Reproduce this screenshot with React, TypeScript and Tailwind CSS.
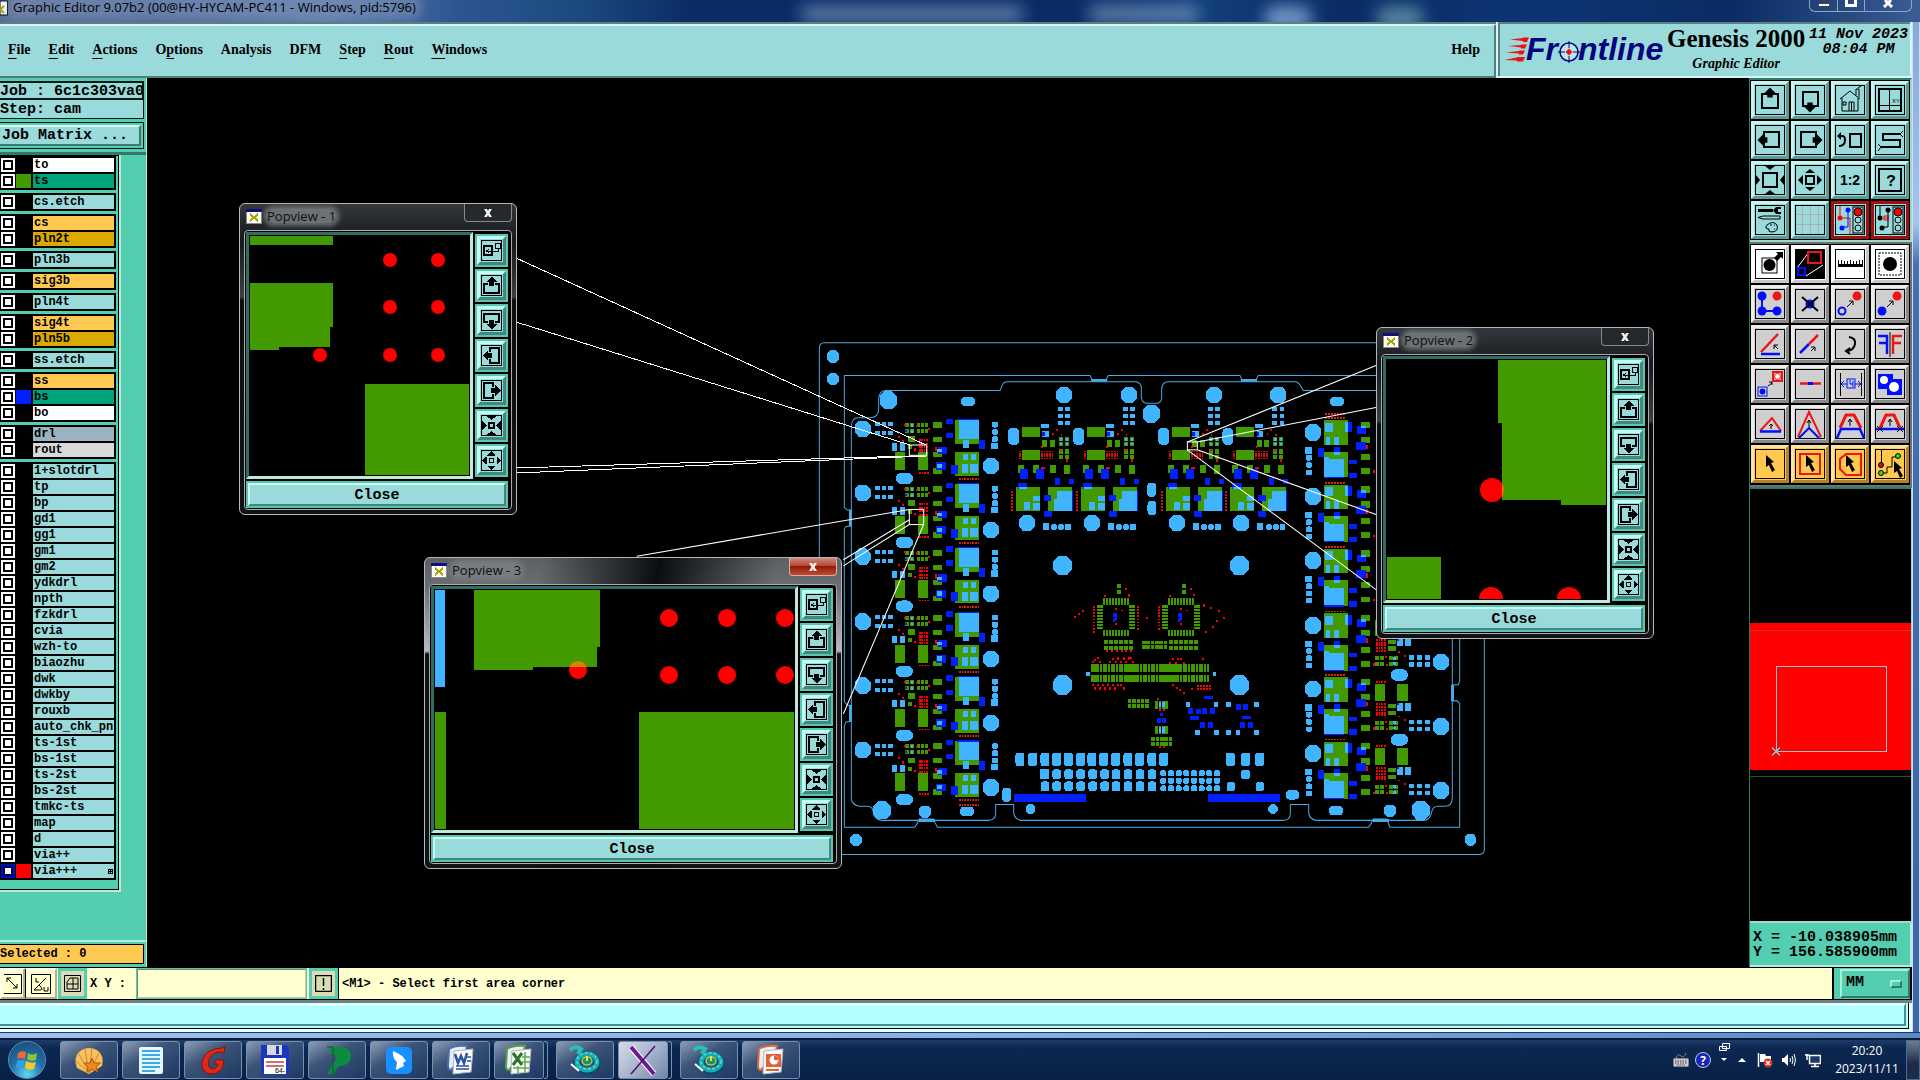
import React from "react";

type Box = [number, number, number, number];

const MONO = "font-['Liberation_Mono','Courier_New',monospace]";
const SERIF = "font-['Liberation_Serif','Times_New_Roman',serif]";
const UI = "font-['Open_Sans','Noto_Sans',sans-serif]";

const GREEN = "#429a00";
const RED = "#ff0000";
const BLUE = "#0020ff";
const SKY = "#40b4ff";

/* ---------------------------------------------------------------- board */

const Boxes = ({ list, fill }: { list: Box[]; fill: string }) => (
  <g fill={fill}>
    {list.map(([x1, y1, x2, y2], i) => (
      <rect key={i} x={x1} y={y1} width={x2 - x1} height={y2 - y1} />
    ))}
  </g>
);

const Pad = ({ x, y, w, h, r = 12 }: { x: number; y: number; w: number; h: number; r?: number }) => (
  <rect x={x - w / 2} y={y - h / 2} width={w} height={h} rx={r} fill={SKY} />
);

const Oct = ({ x, y, r }: { x: number; y: number; r: number }) => {
  const k = r * 0.45;
  return (
    <polygon
      fill={SKY}
      points={`${x - k},${y - r} ${x + k},${y - r} ${x + r},${y - k} ${x + r},${y + k} ${x + k},${y + r} ${x - k},${y + r} ${x - r},${y + k} ${x - r},${y - k}`}
    />
  );
};

const Grid = ({ x, y, nx, ny, px, py, w, h, fill }: { x: number; y: number; nx: number; ny: number; px: number; py: number; w: number; h: number; fill: string }) => (
  <g fill={fill}>
    {Array.from({ length: nx * ny }, (_, i) => (
      <rect key={i} x={x + (i % nx) * px} y={y + Math.floor(i / nx) * py} width={w} height={h} />
    ))}
  </g>
);

const LeftModule = () => (
  <g>
    <Oct x={158} y={287} r={24} />
    <Grid x={195} y={268} nx={3} ny={2} px={20} py={25} w={14} h={12} fill={SKY} />
    <Grid x={285} y={270} nx={2} ny={2} px={15} py={17} w={12} h={12} fill={GREEN} />
    <Grid x={302} y={273} nx={1} ny={2} px={15} py={17} w={8} h={8} fill={SKY} />
    <Grid x={320} y={270} nx={3} ny={2} px={13} py={17} w={9} h={12} fill={GREEN} />
    <Boxes fill={RED} list={[[282, 272, 287, 278], [318, 275, 323, 281], [355, 284, 360, 290], [264, 308, 269, 314], [276, 320, 281, 326], [312, 344, 317, 350], [375, 339, 381, 351]]} />
    <Grid x={327} y={317} nx={4} ny={5} px={7} py={10} w={5} h={6} fill={RED} />
    <Grid x={327} y={412} nx={4} ny={1} px={8} py={8} w={5} h={5} fill={RED} />
    <Boxes fill={GREEN} list={[[369, 267, 396, 285], [293, 309, 315, 325], [293, 335, 307, 347], [369, 310, 396, 325], [255, 354, 285, 407], [324, 354, 354, 407], [369, 354, 396, 370], [369, 400, 396, 417], [435, 261, 507, 331], [435, 354, 507, 423]]} />
    <Boxes fill={BLUE} list={[[409, 257, 429, 273], [409, 298, 429, 314], [440, 258, 507, 262], [384, 339, 411, 360], [379, 384, 408, 407], [423, 391, 443, 417], [507, 319, 525, 345], [286, 290, 290, 296]]} />
    <Boxes fill={SKY} list={[[447, 262, 507, 316], [460, 319, 477, 342], [246, 329, 260, 350], [271, 329, 285, 350], [460, 360, 474, 378], [482, 360, 498, 378], [456, 389, 474, 415], [481, 389, 503, 415], [382, 345, 396, 355], [382, 388, 396, 400], [543, 327, 563, 346]]} />
    <Pad x={555} y={275} w={18} h={17} r={6} />
    <Pad x={555} y={296} w={18} h={17} r={6} />
    <Pad x={555} y={317} w={18} h={17} r={6} />
    <Oct x={543} y={395} r={24} />
    <Grid x={447} y={430} nx={8} ny={1} px={8} py={8} w={5} h={6} fill="#e02010" />
    <Pad x={283} y={431} w={52} h={33} r={18} />
  </g>
);

const TopModule = () => (
  <g>
    <Oct x={762} y={189} r={24} />
    <Grid x={744} y={223} nx={2} ny={3} px={22} py={20} w={14} h={13} fill={SKY} />
    <Pad x={611} y={309} w={33} h={50} r={13} />
    <Boxes fill={GREEN} list={[[636, 282, 690, 311], [697, 318, 712, 340], [720, 318, 734, 340], [636, 348, 690, 377], [624, 392, 642, 416], [668, 392, 686, 416], [720, 392, 737, 416], [762, 392, 780, 418], [618, 457, 690, 525], [714, 457, 786, 525]]} />
    <Boxes fill={SKY} list={[[693, 273, 716, 286], [697, 294, 716, 311]]} />
    <Grid x={747} y={311} nx={2} ny={2} px={17} py={14} w={12} h={11} fill={GREEN} />
    <Grid x={750} y={315} nx={2} ny={2} px={17} py={14} w={7} h={6} fill={SKY} />
    <Grid x={747} y={347} nx={2} ny={2} px={17} py={15} w={12} h={12} fill={GREEN} />
    <Grid x={627} y={350} nx={1} ny={4} px={8} py={7} w={6} h={5} fill={RED} />
    <Grid x={693} y={350} nx={5} ny={4} px={8} py={7} w={5} h={5} fill="#e00c04" />
    <Grid x={603} y={467} nx={1} ny={7} px={8} py={9} w={6} h={6} fill="#d01808" />
    <Boxes fill={RED} list={[[738, 288, 743, 294], [727, 300, 732, 306], [694, 338, 699, 343], [752, 303, 757, 308], [768, 376, 773, 382], [750, 345, 755, 350], [693, 398, 705, 403]]} />
    <Boxes fill={BLUE} list={[[697, 297, 705, 307], [630, 405, 654, 432], [678, 405, 702, 432], [734, 430, 749, 449], [777, 433, 791, 448], [624, 444, 652, 463], [702, 479, 724, 498], [702, 527, 726, 542], [786, 465, 789, 525]]} />
    <Boxes fill={SKY} list={[[642, 500, 660, 523], [669, 483, 690, 497], [669, 502, 690, 523], [732, 467, 786, 525], [699, 561, 717, 580], [627, 457, 651, 463]]} />
    <Boxes fill={GREEN} list={[[732, 467, 742, 490]]} />
    <Oct x={651} y={561} r={24} />
    <Oct x={733} y={572} r={9} />
    <Oct x={754} y={572} r={9} />
    <Boxes fill={SKY} list={[[766, 563, 782, 581]]} />
  </g>
);

const RightModule = () => (
  <g transform="translate(1020 0)">
    <Oct x={489} y={297} r={24} />
    <Grid x={525} y={254} nx={7} ny={1} px={9} py={8} w={6} h={5} fill="#e02010" />
    <Boxes fill={GREEN} list={[[521, 262, 594, 334], [522, 354, 594, 428], [633, 267, 660, 285], [633, 311, 660, 329], [633, 360, 660, 377], [633, 401, 660, 418]]} />
    <Boxes fill={BLUE} list={[[585, 267, 605, 295], [504, 344, 522, 370], [552, 341, 570, 362], [597, 377, 621, 390], [597, 414, 621, 430], [621, 279, 648, 302], [618, 325, 648, 348], [522, 426, 582, 430]]} />
    <Boxes fill={SKY} list={[[525, 269, 549, 295], [528, 310, 540, 333], [552, 310, 567, 333], [585, 267, 594, 295], [522, 370, 582, 427], [552, 354, 570, 362], [633, 279, 648, 286], [465, 341, 486, 360]]} />
    <Boxes fill={GREEN} list={[[538, 364, 582, 376]]} />
    <Boxes fill={RED} list={[[648, 334, 654, 347], [669, 408, 675, 414]]} />
    <Pad x={477} y={371} w={18} h={17} r={6} />
    <Pad x={477} y={392} w={18} h={17} r={6} />
    <Pad x={477} y={413} w={18} h={15} r={4} />
  </g>
);

const FarRightModule = () => (
  <g transform="translate(1020 0)">
    <Oct x={873} y={1151} r={24} />
    <Grid x={777} y={1132} nx={3} ny={2} px={24} py={20} w={14} h={13} fill={SKY} />
    <Boxes fill={GREEN} list={[[675, 1028, 705, 1077], [741, 1028, 774, 1077], [714, 1087, 737, 1098], [714, 1106, 737, 1118]]} />
    <Grid x={678} y={1084} nx={4} ny={5} px={8} py={8} w={5} h={6} fill={RED} />
    <Grid x={678} y={1019} nx={4} ny={1} px={8} py={8} w={5} h={5} fill={RED} />
    <Boxes fill={SKY} list={[[741, 1084, 759, 1105], [765, 1084, 783, 1105]]} />
    <Boxes fill={BLUE} list={[[741, 1084, 747, 1090]]} />
    <Grid x={675} y={1134} nx={2} ny={2} px={16} py={16} w={12} h={12} fill={GREEN} />
    <Grid x={717} y={1134} nx={2} ny={2} px={16} py={16} w={12} h={12} fill={GREEN} />
    <Grid x={730} y={1136} nx={1} ny={2} px={16} py={16} w={9} h={8} fill={SKY} />
    <Boxes fill={RED} list={[[705, 1134, 710, 1140], [669, 1155, 674, 1161], [762, 1130, 767, 1136], [744, 1120, 749, 1125], [709, 1157, 714, 1162]]} />
  </g>
);

const Chip = () => (
  <g>
    <Grid x={879} y={779} nx={9} ny={1} px={9} py={0} w={6} h={19} fill={GREEN} />
    <Grid x={879} y={871} nx={9} ny={1} px={9} py={0} w={6} h={19} fill={GREEN} />
    <Grid x={861} y={800} nx={1} ny={8} px={0} py={9} w={18} h={6} fill={GREEN} />
    <Grid x={956} y={800} nx={1} ny={8} px={0} py={9} w={18} h={6} fill={GREEN} />
    <Grid x={849} y={802} nx={1} ny={8} px={0} py={9} w={6} h={5} fill={RED} />
    <Boxes fill={GREEN} list={[[921, 739, 933, 750], [921, 755, 933, 766]]} />
    <Boxes fill={BLUE} list={[[910, 822, 921, 832], [909, 836, 914, 848], [915, 832, 921, 845]]} />
    <Boxes fill={RED} list={[[882, 769, 887, 775], [945, 749, 950, 755], [954, 767, 959, 773], [915, 808, 920, 813], [933, 812, 938, 817], [915, 852, 920, 857]]} />
    <Grid x={882} y={901} nx={6} ny={2} px={15} py={16} w={12} h={11} fill={GREEN} />
  </g>
);

const RED_SPECKS: Array<[number, number]> = [
  [792, 830], [804, 822], [816, 813], [1008, 833], [846, 961], [852, 954], [860, 950], [866, 961], [898, 961], [906, 952], [914, 961], [921, 951], [929, 961], [938, 951], [946, 961], [953, 951], [960, 949], [966, 961],
  [888, 930], [903, 930], [917, 930], [932, 930], [945, 930], [960, 930], [846, 1029], [852, 1038], [860, 1029], [867, 1038], [875, 1029], [883, 1038], [890, 1029], [898, 1038], [905, 1029], [912, 1038], [920, 1029], [930, 1029], [938, 1038],
  [850, 874], [954, 769], [1078, 963], [1086, 953], [1094, 963], [1102, 953], [1110, 953], [1118, 963], [1176, 952], [1086, 1029], [1097, 1036], [1108, 1042], [1119, 1051], [1180, 797], [1199, 805], [1225, 814], [1240, 833], [1218, 843], [1206, 859], [1186, 875], [1144, 1040], [1040, 1069],
];

const leftTops = [0, 186, 371, 560, 746, 933];

const Board = () => (
  <svg className="absolute inset-0 h-full w-full" viewBox="147 78 1602 889" preserveAspectRatio="xMinYMin meet" shapeRendering="crispEdges" role="img" aria-label="Circuit board view">
    <g transform="translate(810 330) scale(0.33333 0.34436)">
      <g fill="none" stroke="#4aa8e4" strokeWidth="3">
        <rect x="28" y="37" width="1995" height="1486" rx="14" />
        <path d="M103 132H840L845 141V149H890V141L895 132H1290L1294 141V149H1340V141L1345 132H1949V1020L1945 1030H1928V1077H1942L1949 1085V1444H1740L1734 1430L1728 1420H1690L1684 1432L1676 1444H382L376 1432L370 1420H328L322 1432L314 1444H103V1150L108 1138L124 1136V1090H112L103 1080V578L108 570H124V523H112L103 515Z" />
        <path d="M124 280Q125 255 145 255H180Q205 255 206 230V200Q208 176 228 176H570L577 160Q580 150 592 150H978Q994 152 994 170V195Q996 213 1012 213H1038Q1055 212 1055 195V172Q1056 150 1075 150H1455Q1468 152 1473 165L1480 176H1900L1927 200V1360Q1926 1383 1905 1383H1885Q1868 1383 1865 1400Q1860 1424 1840 1424H1518Q1497 1420 1496 1400V1378H1441V1405Q1440 1424 1420 1424H633Q612 1420 611 1400V1378H557V1405Q556 1424 535 1424H215Q192 1420 190 1400Q188 1383 172 1383H148Q126 1380 124 1360Z" />
        <path d="M845 146H890M1294 146H1340M328 1424H376M1690 1424H1736" strokeWidth="7" />
        <path d="M122 523V568M122 1090V1136M1928 1030V1077" strokeWidth="7" />
      </g>

      {leftTops.map((t) => (
        <g key={t} transform={`translate(0 ${t})`}>
          <LeftModule />
        </g>
      ))}
      <Grid x={447} y={1377} nx={8} ny={1} px={8} py={8} w={5} h={6} fill="#e02010" />
      {[0, 195, 450, 643].map((t) => (
        <g key={t} transform={`translate(${t} 0)`}>
          <TopModule />
        </g>
      ))}
      {[0, 187, 373, 561, 746, 933].map((t) => (
        <g key={t} transform={`translate(0 ${t})`}>
          <RightModule />
        </g>
      ))}
      {[-187, 0, 186].map((t) => (
        <g key={t} transform={`translate(0 ${t})`}>
          <FarRightModule />
        </g>
      ))}
      <Pad x={1768} y={1002} w={52} h={34} r={18} />
      <Pad x={1768} y={1190} w={52} h={34} r={18} />
      <Grid x={1545} y={240} nx={7} ny={1} px={9} py={8} w={6} h={6} fill="#e02010" />

      <Oct x={69} y={77} r={18} />
      <Oct x={69} y={142} r={18} />
      <Oct x={138} y={1481} r={18} />
      <Oct x={1981} y={1480} r={17} />
      <Oct x={235} y={204} r={26} />
      <Oct x={216} y={1395} r={26} />
      <Oct x={345} y={1399} r={18} />
      <Oct x={1024} y={243} r={26} />
      <Oct x={1740} y={1396} r={18} />
      <Oct x={1832} y={1395} r={27} />
      <Pad x={474} y={208} w={42} h={26} />
      <Pad x={471} y={1398} w={42} h={27} />
      <Pad x={1581} y={208} w={42} h={26} />
      <Pad x={1578} y={1396} w={42} h={27} />
      <Pad x={1025} y={464} w={27} h={42} />
      <Pad x={1026} y={517} w={27} h={42} />
      <Oct x={758} y={684} r={28} />
      <Oct x={758} y={1031} r={28} />
      <Oct x={1288} y={684} r={28} />
      <Oct x={1288} y={1031} r={28} />

      <Chip />
      <Grid x={981} y={802} nx={1} ny={8} px={0} py={9} w={6} h={5} fill="#d01808" />
      <g transform="translate(195 0)">
        <Chip />
      </g>
      <Grid x={996} y={903} nx={6} ny={2} px={13} py={13} w={11} h={10} fill={GREEN} />
      <Boxes fill={GREEN} list={[[843, 970, 868, 993], [843, 1001, 868, 1021], [948, 970, 978, 993], [948, 1001, 978, 1021], [1060, 970, 1110, 993], [1060, 1001, 1100, 1021]]} />
      <Grid x={870} y={970} nx={41} ny={1} px={8} py={0} w={6} h={23} fill={GREEN} />
      <Grid x={870} y={1001} nx={41} ny={1} px={8} py={0} w={6} h={20} fill={GREEN} />
      <Boxes fill={SKY} list={[[828, 992, 840, 1004], [1208, 992, 1218, 1004]]} />
      <Grid x={954} y={1072} nx={5} ny={2} px={13} py={14} w={10} h={11} fill={GREEN} />
      <Grid x={1036} y={1076} nx={4} ny={1} px={10} py={0} w={8} h={24} fill={GREEN} />
      <Grid x={1046} y={1080} nx={2} ny={1} px={11} py={0} w={7} h={16} fill={SKY} />
      <Grid x={1042} y={1128} nx={2} ny={1} px={15} py={0} w={12} h={14} fill={BLUE} />
      <Boxes fill={BLUE} list={[[1050, 1112, 1058, 1122]]} />
      <Grid x={1036} y={1150} nx={4} ny={1} px={10} py={0} w={8} h={23} fill={GREEN} />
      <Grid x={1046} y={1153} nx={2} ny={1} px={11} py={0} w={7} h={16} fill={SKY} />
      <Grid x={1024} y={1183} nx={5} ny={2} px={13} py={13} w={11} h={11} fill={GREEN} />
      <Grid x={1046} y={1102} nx={2} ny={1} px={12} py={0} w={6} h={5} fill={RED} />
      <Grid x={1046} y={1208} nx={2} ny={1} px={14} py={0} w={6} h={5} fill={RED} />
      <Grid x={1160} y={1031} nx={5} ny={2} px={9} py={8} w={6} h={6} fill={RED} />
      <g fill={RED}>
        {RED_SPECKS.map(([x, y], i) => (
          <rect key={i} x={x} y={y} width="6" height="6" />
        ))}
      </g>
      <Boxes fill={BLUE} list={[[1182, 1064, 1208, 1073], [1134, 1098, 1150, 1114], [1158, 1102, 1172, 1116], [1176, 1098, 1190, 1114], [1200, 1098, 1215, 1114], [1278, 1086, 1292, 1103], [1299, 1086, 1314, 1103], [1141, 1122, 1167, 1132], [1170, 1138, 1185, 1155], [1193, 1138, 1208, 1155], [1296, 1122, 1322, 1131], [1291, 1138, 1305, 1155], [1313, 1138, 1328, 1155]]} />
      <Boxes fill={SKY} list={[[1127, 1080, 1140, 1095], [1212, 1080, 1225, 1095], [1249, 1080, 1262, 1095], [1332, 1079, 1347, 1095], [1155, 1161, 1169, 1177], [1212, 1161, 1226, 1177], [1249, 1161, 1262, 1177], [1277, 1161, 1291, 1177], [1332, 1161, 1347, 1177]]} />

      {[630, 668, 705, 740, 775, 812, 846, 881, 917, 954, 989, 1026, 1061, 1261, 1307, 1349].map((x) => (
        <Pad key={x} x={x} y={1247} w={27} h={40} r={9} />
      ))}
      <Boxes fill={SKY} list={[[690, 1276, 717, 1304]]} />
      {[740, 776, 812, 848, 884, 918, 954, 990, 1026].map((x) => (
        <Pad key={x} x={x} y={1290} w={26} h={28} r={7} />
      ))}
      {[705, 740, 776, 812, 848, 884, 918, 954, 990, 1026].map((x) => (
        <Pad key={x} x={x} y={1325} w={26} h={28} r={7} />
      ))}
      {[1287, 1309, 1331].map((y) =>
        [1060, 1083, 1106, 1129, 1152, 1175, 1198, 1221].map((x) => <Pad key={`${x}-${y}`} x={x} y={y} w={18} h={17} r={5} />)
      )}
      <Pad x={590} y={1350} w={27} h={42} />
      <Pad x={1447} y={1350} w={40} h={27} />
      <Pad x={1307} y={1291} w={27} h={26} r={8} />
      <Pad x={1263} y={1326} w={26} h={26} r={8} />
      <Pad x={1350} y={1326} w={26} h={26} r={8} />
      <Oct x={662} y={1391} r={14} />
      <Oct x={1389} y={1391} r={14} />
      <Boxes fill={BLUE} list={[[612, 1347, 828, 1371], [1194, 1347, 1410, 1371]]} />

      <g fill="none" stroke="#ffffff" strokeWidth="3">
        <rect x="298" y="334" width="52" height="30" />
        <rect x="298" y="521" width="43" height="44" />
        <rect x="1132" y="325" width="30" height="23" />
        <path d="M298 521L-520 657M298 551L100 667M298 565L100 685M341 565L100 1115" />
        <path d="M1132 325L1698 103M1162 325L1698 225M1162 348L1698 536M1132 348L1698 754" />
      </g>
    </g>
    <path d="M516 258L926 445M516 322L910 445M516 468L910 456M516 473L926 456" stroke="#ffffff" fill="none" />
  </svg>
);

/* -------------------------------------------------------- popview windows */

const ARROW_UP = "0,-5 5,0 2.5,0 2.5,4 -2.5,4 -2.5,0 -5,0";

const popIcons: { name: string; art: React.ReactNode }[] = [
  {
    name: "Link view",
    art: (
      <>
        <rect x="3" y="6" width="8" height="9" fill="none" stroke="#000" strokeWidth="2" />
        <rect x="14" y="3" width="5" height="5" fill="none" stroke="#000" />
        <path d="M17 8V11H5M8 9L5.500 11L8 13" fill="none" stroke="#000" />
      </>
    ),
  },
  {
    name: "Pan up",
    art: (
      <>
        <path d="M7 9H3V18H18V9H14" fill="none" stroke="#000" strokeWidth="2" />
        <polygon points={ARROW_UP} transform="translate(10.5 7) scale(1.1)" />
      </>
    ),
  },
  {
    name: "Pan down",
    art: (
      <>
        <path d="M7 12H3V4H18V12H14" fill="none" stroke="#000" strokeWidth="2" />
        <polygon points={ARROW_UP} transform="translate(10.5 14) scale(1.1 -1.1)" />
      </>
    ),
  },
  {
    name: "Pan left",
    art: (
      <>
        <path d="M9 7V3H18V18H9V14" fill="none" stroke="#000" strokeWidth="2" />
        <polygon points={ARROW_UP} transform="translate(7 10.5) rotate(-90) scale(1.1)" />
      </>
    ),
  },
  {
    name: "Pan right",
    art: (
      <>
        <path d="M12 7V3H3V18H12V14" fill="none" stroke="#000" strokeWidth="2" />
        <polygon points={ARROW_UP} transform="translate(14 10.5) rotate(90) scale(1.1)" />
      </>
    ),
  },
  {
    name: "Zoom out",
    art: (
      <>
        <rect x="8" y="8" width="5" height="5" fill="none" stroke="#000" strokeWidth="2" />
        <path d="M5 1H16L13 3H12L10.500 5L9 3H8ZM5 20H16L13 18H12L10.500 16L9 18H8ZM1 5V16L3 13L6 10.500L3 8ZM20 5V16L18 13L15 10.500L18 8Z" />
      </>
    ),
  },
  {
    name: "Zoom in",
    art: (
      <>
        <rect x="8.500" y="8.500" width="4" height="4" fill="none" stroke="#000" />
        <path d="M6.500 5.500L10.500 1L14.500 5.500ZM6.500 15.500L10.500 20L14.500 15.500ZM5.500 6.500L1 10.500L5.500 14.500ZM15.500 6.500L20 10.500L15.500 14.500Z" />
      </>
    ),
  },
];

const AppIcon = () => (
  <svg className="h-4 w-4 shrink-0" viewBox="0 0 16 16" shapeRendering="crispEdges" aria-hidden="true">
    <rect x="0.500" y="1.500" width="15" height="14" fill="#fff" stroke="#8a8a8a" />
    <rect x="0" y="1" width="16" height="3" fill="#10107a" />
    <path d="M4 6L12 13M12 6L4 13" stroke="#a8a800" strokeWidth="2" />
  </svg>
);

const frameDark = "bg-[linear-gradient(180deg,#34383c_0%,#15181c_12%,#3c3f42_30%,#0c0d0f_31%,#101316_100%)]";
const frameGrey = "bg-[linear-gradient(100deg,transparent_25%,#0a0d12_50%,transparent_75%),linear-gradient(180deg,#5c6064_0%,#6c7074_10%,#b8bcc0_30%,#101214_31%,#101316_100%)]";

function Popview({ title, view, place, hot, children }: { title: string; view: string; place: string; hot?: boolean; children: React.ReactNode }) {
  return (
    <section aria-label={title} className={`absolute flex flex-col rounded-md border border-[#b4b8bc] px-1 pb-1 ${hot ? frameGrey : frameDark} ${place}`}>
      <header className="flex h-[26px] items-start pl-0.5">
        <span className="flex items-center gap-[5px] pt-1">
          <AppIcon />
          <span className={`rounded-md bg-[#7c8284]/80 text-[13px] leading-[14px] text-[#101010] shadow-[0_0_5px_3px_rgba(124,130,132,0.8)] ${UI}`}>{title}</span>
        </span>
        <button aria-label={`Close ${title}`} className={`ml-auto flex h-[18px] w-[48px] items-center justify-center rounded-b-[4px] border border-t-0 text-white ${hot ? "border-[#d8b0a8] bg-[linear-gradient(180deg,#d08a7e_0%,#b84634_45%,#8e1c0c_50%,#c44a30_100%)]" : "border-[#85898c] bg-[#26292c]"}`}>
          <svg className="h-2.5 w-2.5" viewBox="0 0 10 10" aria-hidden="true">
            <path d="M1 1H4L5 3L6 1H9L6.500 5L9 9H6L5 7L4 9H1L3.500 5Z" fill="#f4f4f4" />
          </svg>
        </button>
      </header>
      <div className="flex min-h-0 flex-1 flex-col gap-0.5 rounded-sm border border-[#a8acb0] bg-black p-px pr-[3px]">
        <div className="flex min-h-0 flex-1 gap-0.5">
          <div className="min-w-0 flex-1 border-[3px] border-b-[#bdeade] border-l-[#2f6e60] border-r-[#bdeade] border-t-[#2f6e60]">
            <svg className="h-full w-full" viewBox={view} preserveAspectRatio="none" role="img" aria-label={`${title} detail`}>
              {children}
            </svg>
          </div>
          <div className="flex flex-col gap-0.5 pt-0.5">
            {popIcons.map((icon) => (
              <button key={icon.name} aria-label={icon.name} className="h-[33px] w-[33px] border-2 border-[#5cc4ac]">
                <span className="flex h-full w-full items-center justify-center border-[3px] border-b-[#3f8a80] border-l-[#c2fbf4] border-r-[#3f8a80] border-t-[#c2fbf4] bg-[#9bdada]">
                  <svg className="h-[21px] w-[21px] shrink-0" viewBox="0 0 21 21" shapeRendering="crispEdges" aria-hidden="true">
                    <rect x="0.500" y="0.500" width="20" height="20" fill="none" stroke="#000" />
                    {icon.art}
                  </svg>
                </span>
              </button>
            ))}
          </div>
        </div>
        <button className="h-[27px] border-2 border-[#5cc4ac]">
          <span className={`flex h-full items-center justify-center border-2 border-b-[#3f8a80] border-l-[#c2fbf4] border-r-[#3f8a80] border-t-[#c2fbf4] bg-[#9bdada] pt-0.5 text-[15px] font-bold leading-[17px] text-black ${MONO}`}>Close</span>
        </button>
      </div>
    </section>
  );
}

const Dot = ({ x, y, r }: { x: number; y: number; r: number }) => <circle cx={x} cy={y} r={r} fill={RED} />;

/* ----------------------------------------------------------- left layers */

type Layer = { name: string; tone: string; swatch?: string; active?: boolean };

const AQUA = "bg-[#9bdada]";
const WHITE = "bg-white";
const MINT = "bg-[#00a37c]";
const AMBER = "bg-[#ffc850]";
const GOLD = "bg-[#dba900]";

const layerGroups: Layer[][] = [
  [{ name: "to", tone: WHITE }, { name: "ts", tone: MINT, swatch: "bg-[#429a00]" }],
  [{ name: "cs.etch", tone: AQUA }],
  [{ name: "cs", tone: AMBER }, { name: "pln2t", tone: GOLD }],
  [{ name: "pln3b", tone: AQUA }],
  [{ name: "sig3b", tone: AMBER }],
  [{ name: "pln4t", tone: AQUA }],
  [{ name: "sig4t", tone: AMBER }, { name: "pln5b", tone: GOLD }],
  [{ name: "ss.etch", tone: AQUA }],
  [{ name: "ss", tone: AMBER }, { name: "bs", tone: MINT, swatch: "bg-[#0020ff]" }, { name: "bo", tone: WHITE }],
  [{ name: "drl", tone: "bg-[#9bb3bf]" }, { name: "rout", tone: "bg-[#d9d9d9]" }],
  [
    ..."1+slotdrl tp bp gd1 gg1 gm1 gm2 ydkdrl npth fzkdrl cvia wzh-to biaozhu dwk dwkby rouxb auto_chk_pnl ts-1st bs-1st ts-2st bs-2st tmkc-ts map d via++"
      .split(" ")
      .map((name) => ({ name, tone: AQUA })),
    { name: "via+++", tone: AQUA, swatch: "bg-[#ff0000]", active: true },
  ],
];

const LayerRow = ({ layer }: { layer: Layer }) => (
  <li>
    <label className="flex h-4 items-center gap-px pl-px">
      <span className={`flex h-3.5 w-3.5 items-center justify-center ${layer.active ? "bg-[#0010b8]" : "bg-white"}`}>
        <input type="checkbox" defaultChecked={layer.active} className="h-2.5 w-2.5 appearance-none border-2 border-black bg-white checked:border-[#000050]" />
      </span>
      <span className={`h-3.5 w-[15px] ${layer.swatch ?? "bg-black"}`} />
      <span className={`ml-px flex h-3.5 min-w-0 flex-1 items-center overflow-hidden whitespace-nowrap pl-px text-[12px] font-bold leading-[14px] text-black ${layer.tone}`}>
        {layer.name}
        {layer.active && (
          <svg className="ml-auto mr-px h-[5px] w-[5px]" viewBox="0 0 5 5" shapeRendering="crispEdges" aria-hidden="true">
            <path d="M.5 .5H4.500V4.500H.5ZM2.500 0V5M0 2.500H5" fill="none" stroke="#000" />
          </svg>
        )}
      </span>
    </label>
  </li>
);

const Sidebar = () => (
  <aside className={`flex w-[147px] shrink-0 flex-col border-r border-r-[#bdeade] bg-[#54ceb1] text-black ${MONO}`}>
    <div className="flex flex-col pb-[3px] pr-0.5 pt-[3px]">
      <div className="h-[19px] overflow-hidden whitespace-nowrap border-2 border-l-0 border-[#0a1a18] bg-[#9bdada] text-[15px] font-bold leading-[17px]">Job : 6c1c303va0</div>
      <div className="h-[19px] border border-l-0 border-t-0 border-[#0a1a18] bg-[#9bdada] text-[15px] font-bold leading-[19px]">Step: cam</div>
      <div className="mt-[3px] border border-l-0 border-[#0a1a18] py-0.5 pr-0.5">
        <button className="block h-[21px] w-full border-2 border-l-0 border-b-[#3f7a78] border-r-[#3f7a78] border-t-[#d6f6f6] bg-[#9bdada] pl-0.5 text-left text-[15px] font-bold leading-[16px]">Job Matrix ...</button>
      </div>
    </div>
    <div className="flex min-h-0 flex-1 flex-col border-b-2 border-t-[3px] border-b-[#bdeade] border-t-[#2f7a68]">
      <div className="w-[121px] border-b-2 border-r-2 border-b-[#bdeade] border-r-[#bdeade]">
        <div className="flex flex-col gap-[3px] border-b border-r border-t border-black pb-[9px] pr-0.5">
          {layerGroups.map((group, i) => (
            <ul key={i} className="bg-black py-px pr-0.5">
              {group.map((layer) => (
                <LayerRow key={layer.name} layer={layer} />
              ))}
            </ul>
          ))}
        </div>
      </div>
    </div>
    <div className="pb-[3px] pr-0.5 pt-0.5">
      <div className="h-5 border border-l-0 border-black bg-[#ffc850] text-[12px] font-bold leading-[18px]">Selected : 0</div>
    </div>
  </aside>
);

/* -------------------------------------------------------- right toolbars */

const K = "#000";
const GR = "#0010ff";
const RD = "#f01414";

type Tool = { name: string; art: React.ReactNode; hot?: boolean; dark?: boolean };

const Lights = ({ a, b }: { a: string; b: string }) => (
  <>
    <rect x="18" y="2" width="10" height="26" fill="none" stroke={K} />
    <circle cx="23" cy="7" r="4" fill={RED} stroke={K} />
    <circle cx="23" cy="15" r="3" fill="none" stroke={K} />
    <circle cx="23" cy="23" r="3" fill="none" stroke={K} />
    <path d="M13 5V22H7" fill="none" stroke={a} />
    <circle cx="13" cy="5" r="2.500" fill={a} />
    <circle cx="7" cy="23" r="2.500" fill={a} />
    <circle cx="5" cy="13" r="2.500" fill={b} />
  </>
);

const viewTools: Tool[] = [
  { name: "Pan up", art: <><rect x="7" y="9" width="16" height="14" fill="none" stroke={K} strokeWidth="2" /><polygon points={ARROW_UP} transform="translate(15 8) scale(1.1)" /></> },
  { name: "Pan down", art: <><rect x="8" y="7" width="15" height="14" fill="none" stroke={K} strokeWidth="2" /><polygon points={ARROW_UP} transform="translate(15 22) scale(1.1 -1.1)" /></> },
  { name: "Home view", art: <><path d="M5 14L15 6L25 14M7 13V26H23V13M21 10V4H24V12M14 26V17H19V26M16.500 17V26M8 17H11V20H8Z" fill="none" stroke={K} /><path d="M23 3L26 1" stroke={K} /></> },
  { name: "Zoom to XY", art: <><rect x="4" y="4" width="22" height="22" fill="none" stroke={K} strokeWidth="2" /><path d="M14.500 4V26M4 20.500H26" stroke={K} /><text x="17" y="18" fontSize="6" fontFamily="Liberation Sans, sans-serif">XY</text></> },
  { name: "Pan left", art: <><rect x="9" y="7" width="15" height="15" fill="none" stroke={K} strokeWidth="2" /><polygon points={ARROW_UP} transform="translate(8 15) rotate(-90) scale(1.1)" /></> },
  { name: "Pan right", art: <><rect x="6" y="7" width="15" height="15" fill="none" stroke={K} strokeWidth="2" /><polygon points={ARROW_UP} transform="translate(22 15) rotate(90) scale(1.1)" /></> },
  { name: "Previous view", art: <><rect x="15" y="9" width="11" height="13" fill="none" stroke={K} strokeWidth="2" /><path d="M4 11H7Q10 11 10 15Q10 21 4 21" fill="none" stroke={K} strokeWidth="2" /><path d="M2 11L6 7V15Z" /></> },
  { name: "Serpentine", art: <><path d="M25 9H8V15H25V22H6" fill="none" stroke={K} strokeWidth="2" /><path d="M28 6L25 9L28 12M3 19L6 22L3 26" fill="none" stroke={K} /></> },
  { name: "Zoom out", art: <><rect x="8" y="8" width="14" height="14" fill="none" stroke={K} strokeWidth="2" /><path d="M10 1H20L15 5ZM10 29H20L15 25ZM1 10V20L5 15ZM29 10V20L25 15Z" /></> },
  { name: "Zoom in", art: <><rect x="11" y="11" width="8" height="8" fill="none" stroke={K} strokeWidth="2" /><path d="M10 8L15 4L20 8ZM10 22L15 26L20 22ZM8 10L3 15L8 20ZM22 10L27 15L22 20Z" /></> },
  { name: "Scale one to two", art: <text x="15" y="20" textAnchor="middle" fontSize="14" fontWeight="bold" fontFamily="Liberation Sans, sans-serif">1:2</text> },
  { name: "Query", art: <><rect x="4" y="4" width="22" height="22" fill="none" stroke={K} strokeWidth="2" /><text x="16" y="21" textAnchor="middle" fontSize="16" fontWeight="bold" fontFamily="Liberation Mono, monospace">?</text></> },
  { name: "Settings", art: <><path d="M3 4H18V7H3Z" /><path d="M26 2H21L18 5.500L21 9H26V7H23V4H26Z" /><path d="M8 11H25V14H8L3 12.500Z" fill="none" stroke={K} /><path d="M12 20Q18 15 22 20Q24 27 16 27Q13 27 14 24Q9 24 12 20Z" fill="none" stroke={K} /><path d="M15 20H17M19 20H20M19 24H20" stroke={K} /></> },
  { name: "Grid", art: <path d="M7.500 1V29M15.500 1V29M23.500 1V29M1 9.500H29M1 19.500H29" stroke="#b8a8b0" /> },
  { name: "Net check on", hot: true, art: <><path d="M5 1V13H15V29" fill="none" stroke={RED} /><Lights a={GR} b={RED} /></> },
  { name: "Net check off", hot: true, art: <><path d="M5 1V13" fill="none" stroke={K} /><path d="M9 11H14M9 11V15H14M9 13H14" fill="none" stroke={RED} /><Lights a={K} b={K} /></> },
];

const editTools: Tool[] = [
  { name: "Popview", art: <><rect x="7" y="9" width="15" height="15" fill="none" stroke={K} /><circle cx="14.500" cy="16" r="6" /><path d="M19 9L23 5L21 3H28V10L26 8L22 12Z" /></> },
  { name: "Area popview", dark: true, art: <><rect x="0" y="0" width="30" height="30" /><path d="M2 19L14 3M11 27L28 16" stroke="#fff" /><rect x="13" y="3" width="13" height="11" fill="none" stroke={RD} strokeWidth="2" /><rect x="3" y="19" width="7" height="7" fill="none" stroke={GR} strokeWidth="2" /></> },
  { name: "Measure", art: <path d="M3 11H4V15H6V11H7V15H9V12H10V15H12V12H13V15H15V11H16V15H18V12H19V15H21V12H22V15H24V11H25V15H27V11H28V18H3Z" /> },
  { name: "Select pad", art: <><rect x="4" y="4" width="22" height="22" fill="none" stroke={K} strokeDasharray="2 1" /><circle cx="15" cy="15" r="7" /></> },
  { name: "Net select", art: <><path d="M7 7V22H23" fill="none" stroke={GR} strokeWidth="2" /><circle cx="7" cy="7" r="4.500" fill={GR} /><circle cx="7" cy="22" r="4.500" fill={GR} /><circle cx="22" cy="22" r="4.500" fill={GR} /><circle cx="22" cy="7" r="4.500" fill={RD} /></> },
  { name: "Delete", art: <><circle cx="15" cy="15" r="4.500" fill={GR} /><path d="M7 8L23 22M23 8L7 22" stroke={K} strokeWidth="2" /></> },
  { name: "Copy", art: <><circle cx="22" cy="7" r="4.500" fill={RD} /><circle cx="7" cy="22" r="3.500" fill="none" stroke={GR} strokeWidth="2" /><path d="M12 18L18 12M14 12H18V16" fill="none" stroke={K} /></> },
  { name: "Move", art: <><circle cx="22" cy="7" r="4.500" fill={RD} /><circle cx="7" cy="22" r="4.500" fill={GR} /><path d="M12 18L18 12M14 12H18V16" fill="none" stroke={K} /></> },
  { name: "Rotate", art: <><path d="M6 23L23 5" stroke={RD} strokeWidth="2.500" /><path d="M6 25H25" stroke={GR} strokeWidth="2.500" /><path d="M23 20L19 16M19 20V16H23" fill="none" stroke={K} /></> },
  { name: "Stretch", art: <><path d="M5 24L14 15" stroke={GR} strokeWidth="2.500" /><path d="M14 15L23 6" stroke={RD} strokeWidth="2.500" /><path d="M16 22L20 18M16 18H20V22" fill="none" stroke={K} /></> },
  { name: "Undo", art: <path d="M14 8Q21 9 20 15Q19 21 12 22M15 19L11 22L15 25" fill="none" stroke={K} strokeWidth="2" /> },
  { name: "Mirror", art: <><path d="M3 7H12V25M12 14H4" fill="none" stroke={GR} strokeWidth="2.500" /><path d="M27 7H18V25M18 14H26" fill="none" stroke={RD} strokeWidth="2.500" /><path d="M15 3V28" stroke={K} /></> },
  { name: "Copy to layer", art: <><rect x="18" y="3" width="9" height="9" fill="none" stroke={RD} strokeWidth="2" /><circle cx="22.500" cy="7.500" r="3" fill="#fff" stroke={RD} /><rect x="3" y="18" width="9" height="9" fill="none" stroke={GR} /><circle cx="7.500" cy="22.500" r="3" fill={GR} /><path d="M13 17L17 14M14 13H17V16" fill="none" stroke={K} /></> },
  { name: "Connect lines", art: <><path d="M5 14.500H26" stroke={RD} strokeWidth="2.500" /><path d="M13 14.500H18" stroke={GR} strokeWidth="3" /></> },
  { name: "Spacing", art: <><path d="M5.500 4V27M26.500 4V27" stroke={K} /><path d="M6 15H12M20 15H26M9 12L6 15L9 18M23 12L26 15L23 18" fill="none" stroke={GR} /><rect x="12" y="10" width="8" height="9" fill="none" stroke={GR} /><path d="M15 11V15H18M18 12V18" fill="none" stroke={GR} /></> },
  { name: "Surface", art: <><path d="M3 5H18V10H27V26H12V20H3Z" fill={GR} /><circle cx="9" cy="11" r="4" fill="#fff" /><circle cx="19" cy="18" r="5" fill="#fff" /></> },
  { name: "Move corner", art: <><path d="M5 22L17 9L26 22" fill="none" stroke={RD} strokeWidth="2" /><path d="M5 22.500H26" stroke={GR} strokeWidth="2.500" /><path d="M16 20V15M14 17L16 15L18 17" fill="none" stroke={K} /></> },
  { name: "Move vertex", art: <><path d="M3 28L14 3L26 28" fill="none" stroke={RD} strokeWidth="2" /><path d="M4 29L14 19L24 29" fill="none" stroke={GR} strokeWidth="2" /><path d="M14 18V11M12 14L14 11L16 14" fill="none" stroke={K} /></> },
  { name: "Move edge", art: <><path d="M5 19L11 6H19L26 19" fill="none" stroke={RD} strokeWidth="3" /><path d="M2 29L6 20H25L29 29" fill="none" stroke={GR} strokeWidth="2.500" /><path d="M15 17V10M13 13L15 10L17 13" fill="none" stroke={K} /></> },
  { name: "Trim edge", art: <><path d="M5 19L11 6H19L25 19" fill="none" stroke={RD} strokeWidth="3" /><path d="M1 20H29" stroke={GR} strokeWidth="2.500" /><path d="M15 17V10M13 13L15 10L17 13M2 17L8 23M8 17L2 23M22 17L28 23M28 17L22 23" fill="none" stroke={K} /></> },
];

const Cursor = ({ dx = 0, dy = 0 }: { dx?: number; dy?: number }) => (
  <path transform={`translate(${dx} ${dy})`} d="M11 6L19 13L16 14L20 21L17 23L14 16L11 18Z" />
);

const selectTools: Tool[] = [
  { name: "Single select", art: <Cursor /> },
  { name: "Box select", art: <><rect x="5" y="5" width="20" height="20" fill="none" stroke={RD} strokeWidth="2" /><Cursor /></> },
  { name: "Polygon select", art: <><path d="M11 5H26V26H11L5 20V10Z" fill="none" stroke={RD} strokeWidth="2" /><Cursor /></> },
  { name: "Trace select", art: <><path d="M6.500 1V14M6 24H12V18H17V8H22" fill="none" stroke={K} /><circle cx="6" cy="16" r="2.500" fill="#c01818" stroke={K} /><circle cx="6" cy="24" r="2.500" fill="#20e020" stroke={K} /><circle cx="23" cy="7" r="2.500" fill="#20e020" stroke={K} /><Cursor dx={8} dy={6} /></> },
];

const toolTone = {
  aqua: "border-t-[#c8f2ee] border-l-[#c8f2ee] border-b-[#5c9c98] border-r-[#5c9c98] bg-[#9bdada]",
  hot: "border-[#a01010] bg-[#9bdada]",
  white: "border-t-white border-l-white border-b-[#c8c8c8] border-r-[#c8c8c8] bg-white",
  grey: "border-t-[#ececec] border-l-[#ececec] border-b-[#888888] border-r-[#888888] bg-[#cfcfcf]",
  amber: "border-t-[#ffe2a0] border-l-[#ffe2a0] border-b-[#b08420] border-r-[#b08420] bg-[#ffc850]",
};

const ToolButton = ({ tool, tone }: { tool: Tool; tone: keyof typeof toolTone }) => (
  <button aria-label={tool.name} title={tool.name} className={`flex h-[38px] w-[38px] items-center justify-center border-[3px] ${toolTone[tone]}`}>
    <svg className="h-[30px] w-[30px] shrink-0" viewBox="0 0 30 30" aria-hidden="true">
      <rect x="0.500" y="0.500" width="29" height="29" fill="none" stroke={K} />
      {tool.art}
    </svg>
  </button>
);

const ToolPanel = () => (
  <aside className="flex w-[163px] shrink-0 flex-col border-l border-l-[#2f7a68] bg-black">
    <div className="grid grid-cols-4 justify-items-center gap-0.5 border-b-2 border-r-2 border-t-2 border-b-[#9bdac8] border-r-[#9bdac8] border-t-[#2f7a68] p-px">
      {viewTools.map((t) => (
        <ToolButton key={t.name} tool={t} tone={t.hot ? "hot" : "aqua"} />
      ))}
    </div>
    <div className="grid grid-cols-4 justify-items-center gap-0.5 border-b-2 border-r-2 border-t-2 border-[#707070] p-px pb-0.5">
      {editTools.map((t, i) => (
        <ToolButton key={t.name} tool={t} tone={i < 4 ? "white" : "grey"} />
      ))}
      {selectTools.map((t) => (
        <ToolButton key={t.name} tool={t} tone="amber" />
      ))}
    </div>
    <div className="min-h-0 flex-1 border-b-2 border-r border-t-2 border-b-[#9bdac8] border-r-[#9bdac8] border-t-[#2f7a68]">
      <svg className="h-full w-full" viewBox="1750 490 161 431" preserveAspectRatio="none" shapeRendering="crispEdges" role="img" aria-label="Board overview">
        <rect x="1750" y="624" width="161" height="146" fill={RED} />
        <path d="M1750 631.500H1911" stroke="#c84010" />
        <path d="M1750 776.500H1911" stroke="#1c5c0c" />
        <rect x="1776" y="667" width="110" height="85" fill="none" stroke="#90c8c8" />
        <path d="M1772 748L1780 756M1780 748L1772 756" stroke="#90c8c8" />
      </svg>
    </div>
    <div className={`flex h-[44px] flex-col justify-center border-b-2 border-r-2 border-b-[#bdeade] border-r-[#bdeade] bg-[#54ceb1] pl-[3px] pt-0.5 text-[15px] font-bold leading-[15px] text-black ${MONO}`}>
      <output>X = -10.038905mm</output>
      <output>Y = 156.585900mm</output>
    </div>
  </aside>
);

/* --------------------------------------------------------------- top bars */

const menu: [string, string, string][] = [
  ["", "F", "ile"],
  ["", "E", "dit"],
  ["", "A", "ctions"],
  ["O", "p", "tions"],
  ["Analysis", "", ""],
  ["DFM", "", ""],
  ["", "S", "tep"],
  ["", "R", "out"],
  ["", "W", "indows"],
];

const TitleBar = () => (
  <header className="flex h-[22px] shrink-0 items-start justify-between overflow-hidden bg-[linear-gradient(90deg,#5a6f94_0%,#4a679a_8%,#5c7cae_17%,#2c5590_24%,#1c4a80_30%,#0a2c66_36%,#0a2c66_56%,#12407c_62%,#0a2c66_70%,#0c3474_80%,#0a2c62_90%,#3c5c94_100%)]">
    <h1 className="flex items-start">
      <svg className="h-4 w-2 shrink-0" viewBox="8 0 8 16" aria-hidden="true">
        <rect x="8" y="1" width="7.500" height="14" fill="#fff" stroke="#000" />
        <path d="M8 10L12 6M8 9L12 13" stroke="#a8a800" strokeWidth="2" />
      </svg>
      <span className={`ml-[5px] whitespace-nowrap rounded bg-[#8496b8]/50 text-[13px] leading-[14px] text-black shadow-[0_0_8px_6px_rgba(132,150,184,0.5)] ${UI}`}>Graphic Editor 9.07b2 (00@HY-HYCAM-PC411 - Windows, pid:5796)</span>
    </h1>
    <div aria-hidden="true" className="flex gap-16 pt-1.5">
      <span className="h-4 w-56 rounded-full bg-[#98b4d0]/60 blur-sm" />
      <span className="h-4 w-28 rounded-full bg-[#98b4d0]/60 blur-sm" />
      <span className="h-6 w-12 rounded-full bg-[#98c0e8]/70 blur-sm" />
      <span className="h-6 w-12 rounded-full bg-[#70a8b8]/70 blur-sm" />
    </div>
    <div className="mr-2 flex h-3 rounded-b-md border border-t-0 border-[#8fa6c8]">
      <button aria-label="Minimize" className="flex w-7 justify-center border-r border-[#8fa6c8] pt-[3px]"><span className="h-1 w-3 border border-[#444] bg-white" /></button>
      <button aria-label="Maximize" className="flex w-[27px] justify-center border-r border-[#8fa6c8]"><span className="h-[7px] w-3 border-[3px] border-t-0 border-white" /></button>
      <button aria-label="Close" className="flex w-[46px] justify-center">
        <svg className="h-2 w-3" viewBox="0 0 12 8"><path d="M3 0L10 7M9 0L2 7" stroke="#fff" strokeWidth="3" /></svg>
      </button>
    </div>
  </header>
);

const Logo = () => (
  <svg className="h-12 w-[162px] shrink-0 overflow-visible" viewBox="1503 26 162 48" role="img" aria-label="Frontline">
    <path fill="#f01010" d="M1509 39.500L1522 38V37.500H1528L1526 42H1522V41ZM1507 46L1520 45V44.500H1526L1524 48.500H1520V47.500ZM1505 52.500L1518 51V50.500H1524L1522 54.500H1518V53.500ZM1503 60L1516 57.500V57H1524L1522 61.500H1516V60.500Z" />
    <g fill="#06067c" fontFamily="Liberation Sans, Arial, sans-serif" fontWeight="bold" fontStyle="italic" fontSize="32">
      <text x="1525" y="60">Fr</text>
      <text x="1577" y="60">ntline</text>
    </g>
    <circle cx="1568" cy="52" r="9" fill="#b8e8e8" stroke="#06067c" strokeWidth="1.500" />
    <path d="M1568 41V48M1568 56V63M1557 52H1564M1572 52H1579" stroke="#06067c" />
    <path d="M1568 48.500L1571.500 52L1568 55.500L1564.500 52Z" fill="#f01010" />
  </svg>
);

const MenuBar = () => (
  <div className="flex h-14 shrink-0 gap-1 bg-[#d8f4f4] pt-0.5">
    <nav className={`flex flex-1 items-center border-b-2 border-r-2 border-t-2 border-b-[#4f7c7c] border-r-[#4f7c7c] border-t-[#d8f4f4] bg-[#9bdada] pb-[3px] pl-2 pr-[14px] text-[14px] font-bold text-black shadow-[0_-2px_0_#5c8080] ${SERIF}`}>
      <div className="flex gap-[18px]">
        {menu.map(([a, u, b]) => (
          <button key={a + u + b}>
            {a}
            {u && <span className="underline decoration-1 underline-offset-4">{u}</span>}
            {b}
          </button>
        ))}
      </div>
      <button className="ml-auto">Help</button>
    </nav>
    <div className="flex w-[412px] shrink-0 border-b-2 border-r-2 border-b-[#d8f4f4] border-r-[#d8f4f4] bg-[#9bdada] pl-1 text-black shadow-[-2px_-2px_0_#5c8080]">
      <div className="pt-0.5">
        <Logo />
      </div>
      <div className={`flex flex-col items-center pl-px pt-px font-bold ${SERIF}`}>
        <span className="whitespace-nowrap text-[25px] leading-7">Genesis 2000</span>
        <span className="whitespace-nowrap text-[14px] italic leading-[22px]">Graphic Editor</span>
      </div>
      <time className={`ml-auto whitespace-nowrap pr-0.5 pt-[3px] text-center text-[15px] font-bold italic leading-[15px] ${MONO}`}>
        11 Nov 2023
        <br />
        08:04 PM
      </time>
    </div>
  </div>
);

/* ------------------------------------------------------------ bottom bars */

const cmdButton = "flex items-center justify-center border-2 border-t-[#fffff0] border-l-[#fffff0] border-b-[#b0b090] border-r-[#b0b090] bg-[#ffffd0]";

const CommandBar = () => (
  <div className={`flex h-[33px] shrink-0 border-y border-black bg-[#ffffd0] text-[12px] font-bold text-black ${MONO}`}>
    <button aria-label="Absolute coordinates" className={`w-[25px] ${cmdButton}`}>
      <svg className="h-5 w-[18px] shrink-0" viewBox="1 0 18 20" aria-hidden="true"><path d="M.5 .5H18.500V19.500H.5M4 4L14 14M4 8V4H8M14 10V14H10" fill="none" stroke="#000" /></svg>
    </button>
    <button aria-label="Angle coordinates" className={`w-8 border-l border-l-black ${cmdButton}`}>
      <svg className="h-5 w-5" viewBox="0 0 20 20" aria-hidden="true"><path d="M.5 .5H19.500V19.500H.5ZM3 16L15 4M3 16H10M8 11Q11 13 11 16M5 4V8H8M13 13V17H17V13" fill="none" stroke="#000" /></svg>
    </button>
    <button aria-label="Snap to grid" className="ml-px w-[29px] border-[3px] border-[#54ceb1]">
      <span className="flex h-full items-center justify-center bg-[#dcdcb4]">
        <svg className="h-[17px] w-[17px]" viewBox="0 0 17 17" aria-hidden="true"><path d="M.5 .5H16.500V16.500H.5ZM3 7L6 3H14V14H3ZM9 3V14M3 9H14" fill="none" stroke="#000" /></svg>
      </span>
    </button>
    <label htmlFor="xy" className="flex w-[49px] items-center whitespace-nowrap pl-[3px]">X Y :</label>
    <input id="xy" className="w-[171px] border-2 border-b-[#c8c8a0] border-l-[#80806c] border-r-[#c8c8a0] border-t-[#80806c] bg-[#ffffd0] px-1 outline-1 -outline-offset-1 outline-[#54ceb1]" />
    <button aria-label="Notice" className="ml-0.5 w-[29px] border-[3px] border-[#54ceb1]">
      <span className="flex h-full items-center justify-center bg-[#dcdcb4]">
        <svg className="h-[17px] w-[17px]" viewBox="0 0 17 17" aria-hidden="true"><path d="M.5 .5H16.500V16.500H.5ZM8.500 3V11M8.500 13V15" fill="none" stroke="#000" strokeWidth="1.500" /></svg>
      </span>
    </button>
    <p className="flex flex-1 items-center whitespace-nowrap border-l border-black pl-[3px]">&lt;M1&gt; - Select first area corner</p>
    <div className="flex w-[80px] border-l-2 border-r-2 border-black bg-[#54ceb1] py-px pl-1.5">
      <label className="relative flex flex-1">
        <span className="sr-only">Units</span>
        <select className="w-full appearance-none border-2 border-b-[#2f7a68] border-l-[#a8f0dc] border-r-[#2f7a68] border-t-[#a8f0dc] bg-[#54ceb1] pl-1 text-[15px] font-bold">
          <option>MM</option>
        </select>
        <span aria-hidden="true" className="pointer-events-none absolute right-2 top-1/2 h-2 w-3 -translate-y-1/2 border-2 border-b-[#2f7a68] border-l-[#a8f0dc] border-r-[#2f7a68] border-t-[#a8f0dc]" />
      </label>
    </div>
  </div>
);

type Task = { name: string; art: React.ReactNode; gap: string; active?: boolean; stack?: boolean };

const Snake = () => (
  <g fill="none">
    <ellipse cx="18" cy="19" rx="10" ry="8" stroke="#0a4868" strokeWidth="7" />
    <ellipse cx="18" cy="18" rx="10" ry="8" stroke="#18a8b0" strokeWidth="5" />
    <ellipse cx="18" cy="17" rx="10" ry="8" stroke="#50e0d0" strokeWidth="1.500" strokeDasharray="3 2" />
    <ellipse cx="18" cy="17" rx="5" ry="4" fill="#109088" stroke="#b8c830" strokeWidth="1.500" />
    <path d="M18 12V17" stroke="#e8e040" strokeWidth="2" />
    <path d="M1 6Q6 1 12 5L9 10" stroke="#28c0b8" strokeWidth="4" />
    <path d="M2 20L10 27" stroke="#fff" strokeWidth="2" />
  </g>
);

const OfficeDoc = ({ color, children }: { color: string; children: React.ReactNode }) => (
  <>
    <path d="M4 5Q10 1 22 2L20 10L6 26Q3 26 3 22Z" fill="#e8eef4" stroke={color} strokeWidth="2" />
    <path d="M9 7L28 5L26 28L8 30Z" fill="#fafafa" stroke="#b0b8c0" />
    {children}
  </>
);

const tasks: Task[] = [
  { name: "Shell", gap: "ml-1.5", art: <><path d="M16 30L4 24Q0 14 6 8Q14 1 24 6Q32 12 29 22Z" fill="#f4c060" /><path d="M16 29L6 10M16 29L12 5M16 29L19 4M16 29L26 9M16 29L3 17M16 29L30 17" stroke="#d88828" /><path d="M19 14L21 19L27 19L23 23L25 28L19 25L14 28L15 23L11 19L17 19Z" fill="#f08820" stroke="#a85810" /></> },
  { name: "Notes", gap: "ml-1", art: <><rect x="4" y="3" width="24" height="27" rx="2" fill="#e4f6ff" /><path d="M7 7H25M7 11H25M7 15H25M7 19H25M7 23H25M7 27H20" stroke="#40a8dc" strokeWidth="2" /></> },
  { name: "Genesis", gap: "ml-1", art: <path d="M26 4L28 2L27 9L22 8Q14 9 12 16Q10 24 15 25Q20 25 21 20H17L19 16H27Q26 30 14 30Q4 29 5 18Q8 4 26 4Z" fill="#e02818" stroke="#901008" /> },
  { name: "Save", gap: "ml-1", art: <><path d="M2 1H28L30 4V31H2Z" fill="#1838c0" /><rect x="8" y="1" width="15" height="10" fill="#d8d8e0" /><rect x="17" y="2" width="3" height="8" fill="#1838c0" /><rect x="5" y="14" width="22" height="16" fill="#fff" /><path d="M7 18H25M7 22H25" stroke="#c04040" strokeWidth="1.500" /><text x="16" y="29" fontSize="7" fontFamily="Liberation Sans, sans-serif">64-</text></> },
  { name: "Profile", gap: "ml-1", art: <><path d="M10 3H21Q31 5 30 14Q28 22 18 22L12 30H6L12 20Q17 16 14 10H8Z" fill="#0c8c40" /><path d="M6 3H12V30" fill="none" stroke="#085c28" /></> },
  { name: "Messenger", gap: "ml-1", art: <><rect x="3" y="3" width="26" height="27" rx="5" fill="#1890ff" /><path d="M10 7Q20 11 23 17L20 19L21 22L13 26L14 18Q9 14 10 7Z" fill="#fff" /></> },
  { name: "Word", gap: "ml-1", art: <OfficeDoc color="#4870b8"><path d="M10 10L13 19L16 12L19 19L22 9" fill="none" stroke="#2850a0" strokeWidth="2.500" /><path d="M11 22H24M11 25H24M22 13H26M22 17H26" stroke="#2850a0" strokeWidth="1.500" /></OfficeDoc> },
  { name: "Excel", gap: "ml-1", stack: true, art: <OfficeDoc color="#58a040"><path d="M10 9L19 21M19 9L10 21" stroke="#287828" strokeWidth="3" /><path d="M19 13H27M19 18H27M10 24H26M22 8V28M15 22V29" stroke="#60a850" strokeWidth="1.500" /></OfficeDoc> },
  { name: "Snake viewer", gap: "ml-2", art: <Snake /> },
  { name: "X server", gap: "ml-1", active: true, stack: true, art: <><path d="M4 3L27 30" stroke="#fff" strokeWidth="6" /><path d="M4 3L27 30" stroke="#701890" strokeWidth="4" /><path d="M28 2L4 30" stroke="#501070" strokeWidth="1.500" /></> },
  { name: "Snake editor", gap: "ml-2", art: <Snake /> },
  { name: "PowerPoint", gap: "ml-1", art: <OfficeDoc color="#e06840"><rect x="11" y="10" width="15" height="13" fill="#e06030" /><circle cx="19" cy="16" r="4.500" fill="#fff" /><path d="M19 16H23.500A4.500 4.500 0 0 0 19 11.500Z" fill="#e06030" /><path d="M11 26H24" stroke="#e06030" strokeWidth="2" /></OfficeDoc> },
];

const Taskbar = () => (
  <footer className={`flex h-10 shrink-0 items-center bg-[linear-gradient(180deg,#1c3c68_0%,#0c2850_20%,#082048_100%)] text-white ${UI}`}>
    <button aria-label="Start" className="ml-2 flex h-[38px] w-[38px] items-center justify-center rounded-full border border-[#5c90b8] bg-[radial-gradient(circle_at_50%_90%,#60d8f0_0%,#2070a8_45%,#184870_100%)]">
      <svg className="h-[26px] w-[26px]" viewBox="0 0 26 26" aria-hidden="true">
        <path d="M4 6Q8 3 12 5L11 12Q7 10 3 12Z" fill="#f06830" />
        <path d="M14 6Q18 9 23 6L22 13Q17 15 13 12Z" fill="#88c830" />
        <path d="M3 14Q7 12 11 14L10 21Q6 19 2 21Z" fill="#30a0e8" />
        <path d="M12 14Q17 17 22 15L20 22Q15 24 11 21Z" fill="#f8c828" />
      </svg>
    </button>
    <span className="w-2" />
    {tasks.map((t) => (
      <span key={t.name} className={`flex h-[38px] ${t.gap}`}>
        <button aria-label={t.name} className={`flex h-full items-center justify-center rounded-[3px] border border-[#7890b0] ${t.stack ? "w-[50px]" : "w-[58px]"} ${t.active ? "bg-[linear-gradient(135deg,#d8dce8_0%,#a8b4cc_50%,#7088a8_100%)]" : "bg-[linear-gradient(150deg,#8c9cb4_0%,#3c5478_40%,#1c3864_100%)]"}`}>
          <svg className="h-8 w-8" viewBox="0 0 32 32" aria-hidden="true">{t.art}</svg>
        </button>
        {t.stack && <span className="h-full w-1 rounded-r-[3px] border border-l-0 border-[#7890b0]" />}
      </span>
    ))}
    <div className="ml-auto flex items-center gap-[5px]">
      <svg className="h-4 w-4" viewBox="0 0 16 16" aria-hidden="true"><rect x="0.500" y="6.500" width="15" height="8" rx="1" fill="#c8ccd0" stroke="#888" /><path d="M2 9H14M2 11H14M4 13H12" stroke="#404448" strokeDasharray="1.500 1" /><path d="M3 6Q5 1 8 4T13 1" stroke="#888" fill="none" /></svg>
      <svg className="ml-px h-4 w-4" viewBox="0 0 16 16" aria-hidden="true"><circle cx="8" cy="8" r="7.500" fill="#1828b0" stroke="#b8c8f0" /><text x="8" y="12.500" textAnchor="middle" fontSize="12" fontWeight="bold" fill="#fff">?</text></svg>
      <svg className="ml-px h-[22px] w-3.5 self-start" viewBox="0 0 14 22" aria-hidden="true"><path d="M5.500 1.500H12.500V6.500H5.500ZM2.500 4.500H9.500V8.500H2.500Z" fill="#1c3864" stroke="#fff" /><path d="M4 16H10L7 19Z" fill="#fff" /></svg>
      <svg className="ml-0.5 h-2 w-2" viewBox="0 0 8 8" aria-hidden="true"><path d="M0 6L4 2L8 6Z" fill="#fff" /></svg>
      <svg className="ml-1.5 h-4 w-4" viewBox="0 0 16 16" aria-hidden="true"><path d="M1.500 1V15" stroke="#fff" strokeWidth="1.500" /><path d="M3 2H8L9 4H14V10H3Z" fill="#fff" /><circle cx="11" cy="11" r="4.500" fill="#d83020" /><path d="M9 9L13 13M13 9L9 13" stroke="#fff" strokeWidth="1.500" /></svg>
      <svg className="ml-[3px] h-4 w-4" viewBox="0 0 16 16" aria-hidden="true"><path d="M1 6H3L7 2V14L3 10H1Z" fill="#fff" /><path d="M9 6Q10 8 9 10M11 4Q13 8 11 12M13 2Q16 8 13 14" stroke="#fff" fill="none" /></svg>
      <svg className="ml-[3px] h-4 w-4" viewBox="0 0 16 16" aria-hidden="true"><rect x="4.500" y="3.500" width="11" height="8" fill="#1c3864" stroke="#fff" strokeWidth="1.500" /><path d="M10 12V14M6 14.500H14M2 2V8M0 3H4" stroke="#fff" strokeWidth="1.500" /></svg>
      <time className="ml-1.5 w-[70px] text-center text-[12px] leading-[18px]">
        20:20
        <br />
        2023/11/11
      </time>
    </div>
    <button aria-label="Show desktop" className="ml-1 h-10 w-3.5 border border-[#50688c] bg-[linear-gradient(180deg,#6c7c94_0%,#1c2c48_60%)]" />
  </footer>
);

export default function App() {
  return (
    <div className="flex h-screen w-full flex-col overflow-hidden bg-black">
      <TitleBar />
      <div className="flex min-h-0 flex-1">
        <main className="flex min-w-0 flex-1 flex-col">
          <MenuBar />
          <div className="flex min-h-0 flex-1">
            <Sidebar />
            <div className="relative min-w-0 flex-1 overflow-hidden bg-black">
              <Board />
              <Popview title="Popview - 1" view="19 40 221 241" place="left-[92px] top-[125px] h-[312px] w-[278px]">
                <Boxes fill={GREEN} list={[[20, 41, 103, 50], [135, 189, 239, 280]]} />
                <path d="M20 88H103V132H100V152H49V155H20Z" fill={GREEN} />
                {[65, 112, 160].map((y) => [160, 208].map((x) => <Dot key={`${x}-${y}`} x={x} y={y} r={7} />))}
                <Dot x={90} y={160} r={7} />
              </Popview>
              <Popview title="Popview - 2" view="16 39 221 241" place="left-[1229px] top-[249px] h-[312px] w-[278px]">
                <path d="M128 40H236V185H191V180H132V103H128Z" fill={GREEN} />
                <Dot x={122} y={170} r={12} />
                <path d="M132 163Q136 170 132 177Z" fill="#d08800" />
                <rect x="17" y="237" width="54" height="42" fill={GREEN} />
                <path d="M109 279A12 12 0 0 1 133 279ZM187 279A12 12 0 0 1 211 279Z" fill={RED} />
              </Popview>
              <Popview title="Popview - 3" hot view="14 39 361 241" place="left-[277px] top-[479px] h-[312px] w-[418px]">
                <rect x="15" y="40" width="10" height="97" fill={SKY} />
                <path d="M54 40H180V97H177V117H113V120H54Z" fill={GREEN} />
                <Boxes fill={GREEN} list={[[15, 162, 26, 279], [219, 162, 374, 279]]} />
                <Dot x={158} y={120} r={9} />
                <path d="M149.500 117A9 9 0 0 1 166.500 117Z" fill="#d08800" />
                {[68, 125].map((y) => [249, 307, 365].map((x) => <Dot key={`${x}-${y}`} x={x} y={y} r={9} />))}
              </Popview>
            </div>
            <ToolPanel />
          </div>
          <CommandBar />
          <div className="h-8 shrink-0 border-t-[3px] border-t-[#708080] bg-[#e8ffff] pb-[3px] pr-[3px]">
            <div className="h-full border-b border-r border-black bg-[#b3ffff] pb-0.5 pr-0.5">
              <div className="h-full border-b-2 border-r-2 border-t-[3px] border-b-[#4f8c8c] border-r-[#4f8c8c] border-t-[#d8ffff]" />
            </div>
          </div>
        </main>
        <div className="w-2 shrink-0 border-x border-x-[#c8e0f8] bg-[linear-gradient(180deg,#88a8d8_0%,#a8c4ec_20%,#4870b0_24%,#3c64a8_100%)]" />
      </div>
      <div className="h-2 shrink-0 border-b-2 border-t border-b-[#0a1c38] border-t-[#203860] bg-[linear-gradient(90deg,#9cc0f0_0%,#88b0e8_50%,#5c88c8_100%)]" />
      <Taskbar />
    </div>
  );
}
